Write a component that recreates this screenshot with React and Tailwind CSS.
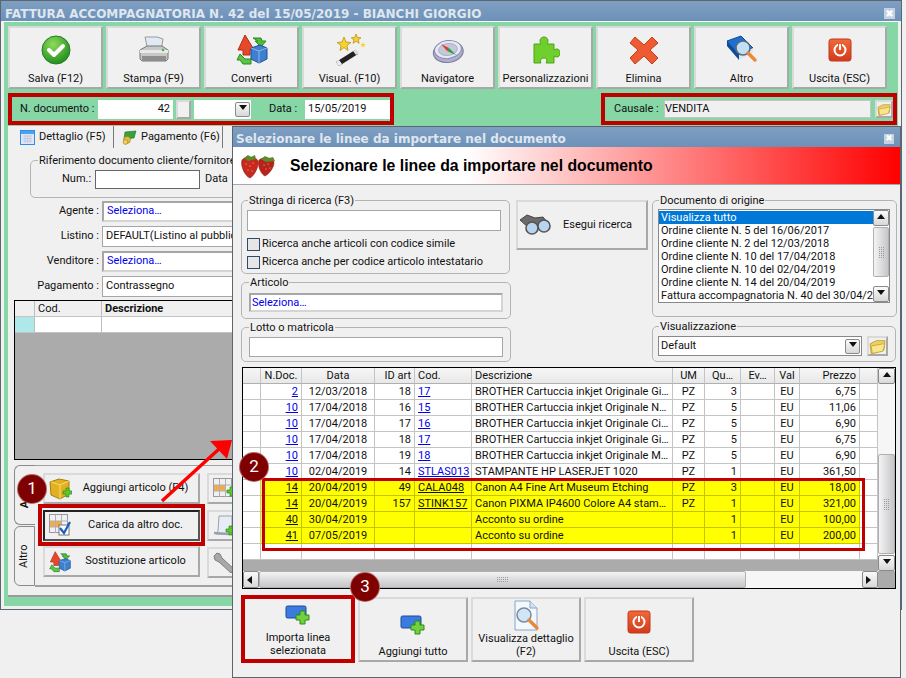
import { Fragment } from "react";

// ---- icons ----
function IconSave() {
  return (
    <svg width="30" height="30" viewBox="0 0 30 30">
      <defs>
        <radialGradient id="sv" cx="40%" cy="30%" r="75%">
          <stop offset="0" stopColor="#8fdc5a" />
          <stop offset="1" stopColor="#1b8a1b" />
        </radialGradient>
      </defs>
      <circle cx="15" cy="15" r="14" fill="url(#sv)" stroke="#2a7d2a" />
      <path d="M8 15l5 5 9-9" fill="none" stroke="#fff" strokeWidth="4" strokeLinecap="round" strokeLinejoin="round" />
    </svg>
  );
}
function IconPrint() {
  return (
    <svg width="32" height="30" viewBox="0 0 32 30">
      <path d="M7 2h12l6 2-2 12H10z" fill="#dfeaf5" stroke="#9a9a9a" />
      <path d="M2 15l7-4h15l6 4v9l-2 2H4l-2-2z" fill="#c8c8c8" stroke="#777" />
      <path d="M2 15h28v3H2z" fill="#e9e9e9" />
      <path d="M4 21h24v5H4z" fill="#8e8e8e" />
      <circle cx="25" cy="15" r="1.2" fill="#39b54a" />
    </svg>
  );
}
function IconConvert({ s = 32 }) {
  return (
    <svg width={s} height={s} viewBox="0 0 32 32">
      <path d="M9 1l8 13-3 2v5H7v-5H2z" fill="#e8482a" stroke="#b32c12" />
      <path d="M17 4h8l1 3h4l-5 6-6-6h3z" fill="#4fbf3a" stroke="#2b8a20" />
      <path d="M4 20l5 5h6v5H7l-3-4H1z" fill="#5ac445" stroke="#2b8a20" />
      <path d="M15 14l9-3 7 3v11l-8 4-8-4z" fill="#3f7fd0" stroke="#1d4f96" />
      <path d="M15 14l8 3 8-3M23 17v12" fill="none" stroke="#8db8ea" />
    </svg>
  );
}
function IconWand() {
  return (
    <svg width="32" height="32" viewBox="0 0 32 32">
      <path d="M2 28l19-12 3 4-19 12z" fill="#222" />
      <path d="M19 17l3-2 3 4-3 2z" fill="#ddd" />
      <path d="M2 28l3-2 3 4-3 2z" fill="#eee" />
      <path d="M10 3l2 5 5 .5-4 3 1 5-4-3-4 3 1-5-4-3 5-.5z" fill="#f7d22e" stroke="#b48a10" strokeWidth=".7" />
      <path d="M22 0l1.5 3.5 3.5.3-2.7 2 .8 3.5-3-2-3 2 .8-3.5-2.7-2 3.5-.3z" fill="#f7d22e" stroke="#b48a10" strokeWidth=".7" />
      <path d="M29 8l.7 2 2 .2-1.5 1.2.5 2-1.7-1.1-1.7 1.1.5-2-1.5-1.2 2-.2z" fill="#f7d22e" />
    </svg>
  );
}
function IconCompass() {
  return (
    <svg width="32" height="28" viewBox="0 0 32 28">
      <g transform="rotate(-8 16 14)">
        <ellipse cx="16" cy="16" rx="15" ry="10.5" fill="#aeaed2" stroke="#7a7a9c" />
        <ellipse cx="16" cy="13.5" rx="13.5" ry="9" fill="#e6e8f6" stroke="#8a8aa8" />
        <ellipse cx="16" cy="13.5" rx="9.5" ry="6" fill="#c4c8d8" stroke="#9a9ab4" strokeWidth=".6" />
      </g>
      <path d="M9 8l8 4-2 3z" fill="#e23b2a" />
      <path d="M24 19l-9-4 2-3z" fill="#2f9e3f" />
    </svg>
  );
}
function IconPuzzle() {
  return (
    <svg width="28" height="30" viewBox="0 0 28 30">
      <path d="M2 9h7c-2-3-1-7 3-7s5 4 3 7h7v6c3-2 6-1 6 3s-3 5-6 3v7h-8c2-3 0-5-2-5s-5 2-3 5H2z" fill="#6fcf2c" stroke="#4aa318" />
    </svg>
  );
}
function IconX() {
  return (
    <svg width="30" height="30" viewBox="0 0 30 30">
      <path d="M6 2l9 8 8-8 6 6-8 7 8 8-6 6-8-8-9 8-5-6 8-8-8-7z" fill="#ee5a32" stroke="#c43d18" strokeLinejoin="round" />
    </svg>
  );
}
function IconBook() {
  return (
    <svg width="32" height="30" viewBox="0 0 32 30">
      <path d="M1 6l14-5 12 12-14 7z" fill="#1f6fd1" stroke="#0f4a9a" />
      <path d="M1 6l12 14v5L1 11z" fill="#0f4a9a" />
      <path d="M13 20l14-7v5l-14 7z" fill="#dfe7f2" />
      <circle cx="17" cy="13" r="7" fill="#bfe0f7" stroke="#5b6b7a" strokeWidth="1.6" />
      <path d="M22 18l7 7" stroke="#e88a3a" strokeWidth="3.4" strokeLinecap="round" />
    </svg>
  );
}
function IconPower({ s = 24 }) {
  return (
    <svg width={s} height={s} viewBox="0 0 24 24">
      <defs>
        <linearGradient id="pw" x1="0" y1="0" x2="0" y2="1">
          <stop offset="0" stopColor="#ef6a3c" />
          <stop offset="1" stopColor="#d23a1c" />
        </linearGradient>
      </defs>
      <rect x="1" y="1" width="22" height="22" rx="2.5" fill="url(#pw)" stroke="#c0391a" />
      <circle cx="12" cy="12" r="5.5" fill="none" stroke="#fff" strokeWidth="2" />
      <path d="M12 5v7" stroke="#e9542a" strokeWidth="4" />
      <path d="M12 6v6" stroke="#fff" strokeWidth="2" />
    </svg>
  );
}
function IconFolder() {
  return (
    <svg width="18" height="17" viewBox="0 0 16 15">
      <path d="M1 5l6-3 8 0-1 9-10 3H2z" fill="#f0d060" stroke="#b89a30" strokeWidth=".8" />
      <path d="M2 7l11-2 2 0-2 7-10 2z" fill="#f8e58c" stroke="#c2a438" strokeWidth=".8" />
    </svg>
  );
}
function IconAddLine() {
  return (
    <svg width="26" height="20" viewBox="0 0 26 20">
      <rect x="1" y="1" width="20" height="12" rx="1.5" fill="#3b7be0" stroke="#1f4a9c" />
      <path d="M15 6h5v4h4v5h-4v4h-5v-4h-4v-5h4z" fill="#73d13d" stroke="#2f8a1a" />
    </svg>
  );
}
function IconDocSearch() {
  return (
    <svg width="27" height="32" viewBox="0 0 27 32">
      <path d="M2 1h15l7 7v22H2z" fill="#f3f8fe" stroke="#8aa4c4" />
      <path d="M17 1v7h7" fill="#d4e3f4" stroke="#8aa4c4" />
      <circle cx="11" cy="15" r="7" fill="#cfe6f8" stroke="#7c8a98" strokeWidth="1.5" />
      <path d="M16 20l8 8" stroke="#e88a3a" strokeWidth="3.4" strokeLinecap="round" />
    </svg>
  );
}
function IconStrawberry() {
  return (
    <svg width="38" height="26" viewBox="0 0 38 26">
      <path d="M2 7c3-4 14-4 16 1 1 6-4 15-8 17-4-1-10-11-8-18z" fill="#c8281e" stroke="#8f1a12" strokeWidth=".6" />
      <path d="M19 7c3-3 14-3 15 2 0 6-5 12-9 14-3-1-8-9-6-16z" fill="#b92219" stroke="#8f1a12" strokeWidth=".6" />
      <path d="M4 5l4-3 3 2 4-2 1 4-8 2zM21 6l4-3 4 2 4-1 2 4-9 1z" fill="#5d8a2b" />
      <path d="M6 11h.1M10 13h.1M13 10h.1M8 17h.1M12 18h.1M24 12h.1M28 11h.1M26 16h.1M30 15h.1" stroke="#f2c7a0" strokeWidth="1.1" strokeLinecap="round" />
    </svg>
  );
}
function IconBinoculars() {
  return (
    <svg width="32" height="22" viewBox="0 0 32 22">
      <path d="M1 6l7-5 8 3 8-1 4 5-7 4-6-2-5 4z" fill="#6b6b6b" stroke="#444" />
      <circle cx="13" cy="14" r="6" fill="#b8d4f0" stroke="#555" strokeWidth="1.6" />
      <circle cx="25" cy="12" r="6" fill="#b8d4f0" stroke="#555" strokeWidth="1.6" />
    </svg>
  );
}
function IconTab() {
  return (
    <svg width="15" height="15" viewBox="0 0 15 15">
      <rect x=".5" y=".5" width="14" height="14" fill="#dfe6f5" stroke="#2f8fe8" />
      <rect x="1" y="1" width="13" height="3" fill="#4aa3ee" />
      <path d="M3 6h9M3 8.5h9M3 11h9M5 5v8M7.5 5v8M10 5v8" stroke="#b8c0d8" strokeWidth=".7" />
    </svg>
  );
}
function IconMoney() {
  return (
    <svg width="15" height="15" viewBox="0 0 15 15">
      <path d="M3 2l11-1-2 7-10 1z" fill="#3aa23a" stroke="#1c6e1c" strokeWidth=".6" />
      <circle cx="5" cy="10" r="3.4" fill="#e8c040" stroke="#9a7a10" strokeWidth=".6" />
      <circle cx="3.5" cy="12" r="2.4" fill="#f0d060" stroke="#9a7a10" strokeWidth=".6" />
    </svg>
  );
}
function IconCube() {
  return (
    <svg width="24" height="24" viewBox="0 0 24 24">
      <path d="M2 5l9-3 10 2v13l-9 5-9-4z" fill="#e2b122" stroke="#a87f10" />
      <path d="M3 5l9 3 9-4M12 8v14" fill="none" stroke="#f6dc70" />
      <path d="M15 14h3v-3h3v3h3v3h-3v3h-3v-3h-3z" fill="#5ac92e" stroke="#2c8a14" strokeWidth=".7" />
    </svg>
  );
}
function IconGrid({ check, plus }) {
  return (
    <svg width="22" height="22" viewBox="0 0 22 22">
      <rect x=".5" y=".5" width="18" height="18" fill="#eef0f4" stroke="#9a9a9a" />
      <rect x="1" y="7" width="12" height="6" fill="#f4a94a" />
      <path d="M6.5 1v18M12.5 1v18M1 7h18M1 13h18" stroke="#b0b0b0" />
      {check && <rect x="10" y="11" width="10" height="10" fill="#fff" stroke="#777" />}
      {check && <path d="M11 14l4 5 6-11" fill="none" stroke="#1a5cc0" strokeWidth="2.2" />}
      {plus && <path d="M14 12h3v-3h3v3h2v3h-2v3h-3v-3h-3z" fill="#5ac92e" stroke="#2c8a14" strokeWidth=".7" />}
    </svg>
  );
}
function IconScroll() {
  return (
    <svg width="22" height="24" viewBox="0 0 22 24">
      <path d="M6 2h13v14l-3 4H3l2-3z" fill="#e8ecf4" stroke="#9aa0b0" />
      <path d="M1 19l15 1" stroke="#9aa0b0" strokeWidth="2.4" />
      <path d="M13 15h3v-3h3v3h3v3h-3v3h-3v-3h-3z" fill="#5ac92e" stroke="#2c8a14" strokeWidth=".7" />
    </svg>
  );
}
function IconWrench() {
  return (
    <svg width="24" height="24" viewBox="0 0 24 24">
      <path d="M2 5l3-3 3 1 2 4 12 11-3 4L7 11 3 9z" fill="#a8a8a8" stroke="#808080" />
    </svg>
  );
}
function Tri({ dir }) {
  const p = { up: "M1 6l4-5 4 5z", down: "M1 1l4 5 4-5z", left: "M6 1L1 5l5 4z", right: "M1 1l5 4-5 4z" }[dir];
  return (
    <svg width="10" height="10" viewBox="0 0 10 10">
      <path d={p} fill="#111" />
    </svg>
  );
}

// ---- bits ----
const raised = "bg-[#f0f0f0] border-2 border-t-[#dadada] border-l-[#dadada] border-r-[#a8a8a8] border-b-[#a8a8a8]";
const scrollBtn = "flex items-center justify-center bg-gradient-to-b from-[#fafafa] to-[#d8d8d8] border border-[#8a8a8a] rounded-[2px]";
const thumbV = "bg-gradient-to-r from-[#f4f4f4] to-[#c6c6ca] border border-[#b0b0b0] rounded-[2px]";
const thumbH = "bg-gradient-to-b from-[#f4f4f4] to-[#c6c6ca] border border-[#b0b0b0] rounded-[2px]";

function Grip({ cols, rows }) {
  return (
    <div className="grid gap-[1px]" style={{ gridTemplateColumns: `repeat(${cols}, 1px)` }}>
      {Array.from({ length: cols * rows }).map((_, i) => (
        <span key={i} className="w-[1px] h-[1px] bg-[#9a9a9a]" />
      ))}
    </div>
  );
}

function ToolButton({ icon, label }) {
  return (
    <button className={`${raised} w-[95px] h-[63px] shrink-0 flex flex-col items-center`}>
      <span className="h-[35px] mt-[5px] flex items-center justify-center">{icon}</span>
      <span className="mt-[4px]">{label}</span>
    </button>
  );
}

function FormRow({ label, value, blue, inset, className = "" }) {
  return (
    <div className={`flex items-center ${className}`}>
      <span className="w-[92px] text-right pr-[3px] shrink-0">{label}</span>
      <div className={`w-[300px] h-[21px] flex items-center pl-[3px] bg-white ${inset ? "border-2 border-[#d4d4d4] border-l-[#a6a6a6] border-t-[#a6a6a6]" : "border border-[#a6a6a6]"} ${blue ? "text-[#0000ee]" : ""}`}>
        {value}
      </div>
    </div>
  );
}

function SideButton({ icon, label, className = "" }) {
  return (
    <button className={`${raised} w-[157px] h-[31px] shrink-0 flex items-center pl-[2px] ${className}`}>
      <span className="w-[26px] flex justify-center shrink-0">{icon}</span>
      <span className="flex-1 text-center whitespace-nowrap">{label}</span>
    </button>
  );
}

function Group({ label, className = "", children }) {
  return (
    <fieldset className={`border border-[#b4b4b4] rounded-[5px] ${className}`}>
      <legend className="leading-[13px] px-[1px]">{label}</legend>
      {children}
    </fieldset>
  );
}

function Check({ label }) {
  return (
    <label className="flex items-center gap-[2px] h-[18px]">
      <span className="w-[13px] h-[13px] bg-[#e6e6e6] border border-[#2e4a66]" />
      <span>{label}</span>
    </label>
  );
}

function DialogButton({ icon, label, className = "" }) {
  return (
    <button className={`${raised} h-[65px] flex flex-col items-center justify-end pb-[2px] leading-[13px] ${className}`}>
      <span className="flex-1 flex items-center justify-center">{icon}</span>
      {label}
    </button>
  );
}

// ---- data ----
const docs = [
  "Visualizza tutto",
  "Ordine cliente N. 5 del 16/06/2017",
  "Ordine cliente N. 2 del 12/03/2018",
  "Ordine cliente N. 10 del 17/04/2018",
  "Ordine cliente N. 10 del 02/04/2019",
  "Ordine cliente N. 14 del 20/04/2019",
  "Fattura accompagnatoria N. 40 del 30/04/2019",
];

const headers = ["", "N.Doc.", "Data", "ID art", "Cod.", "Descrizione", "UM", "Qu…", "Ev…", "Val", "Prezzo", ""];

const rows = [
  ["2", "12/03/2018", "18", "17", "BROTHER Cartuccia inkjet Originale Gi…", "PZ", "3", "EU", "6,75"],
  ["10", "17/04/2018", "16", "15", "BROTHER Cartuccia inkjet Originale N…", "PZ", "5", "EU", "11,06"],
  ["10", "17/04/2018", "17", "16", "BROTHER Cartuccia inkjet Originale Ci…", "PZ", "5", "EU", "6,90"],
  ["10", "17/04/2018", "18", "17", "BROTHER Cartuccia inkjet Originale Gi…", "PZ", "5", "EU", "6,75"],
  ["10", "17/04/2018", "19", "18", "BROTHER Cartuccia inkjet Originale M…", "PZ", "5", "EU", "6,90"],
  ["10", "02/04/2019", "14", "STLAS013", "STAMPANTE HP LASERJET 1020", "PZ", "1", "EU", "361,50"],
  ["14", "20/04/2019", "49", "CALA048", "Canon A4 Fine Art Museum Etching", "PZ", "3", "EU", "18,00", true],
  ["14", "20/04/2019", "157", "STINK157", "Canon PIXMA IP4600 Colore A4 stam…", "PZ", "1", "EU", "321,00", true],
  ["40", "30/04/2019", "", "", "Acconto su ordine", "", "1", "EU", "100,00", true],
  ["41", "07/05/2019", "", "", "Acconto su ordine", "", "1", "EU", "200,00", true],
  ["", "", "", "", "", "", "", "", ""],
];

const cell = "h-4 px-[3px] leading-[15px] border-r border-b border-[#c4c4c4] whitespace-nowrap overflow-hidden";

export default function App() {
  return (
    <div className="relative w-[906px] h-[678px] overflow-hidden bg-[#f0f0f0] text-[11px] text-[#111] font-['Roboto',sans-serif]">
      {/* finestra fattura */}
      <div className="absolute left-0 top-0 w-[902px] h-[610px] border border-[#5c6670] bg-[#f0f0f0] flex flex-col">
        <div className="h-[20px] shrink-0 flex items-center justify-between pt-[5px] pl-[4px] pr-[6px] bg-gradient-to-b from-[#7f9fc2] to-[#6c91b8] text-[#dfe6ee] font-bold text-[12px] font-['DejaVu_Sans',sans-serif] whitespace-nowrap">
          <span>FATTURA ACCOMPAGNATORIA N. 42 del 15/05/2019 - BIANCHI GIORGIO</span>
          <span className="w-[11px] h-[11px] flex items-center justify-center bg-[#c3d2e2] text-white text-[10px]">✖</span>
        </div>

        <div className="flex-1 mx-[3px] mb-[3px] bg-[#86d6a6] border-t border-white flex flex-col pl-[4px]">
          <div className="flex gap-[3px] mt-[4px]">
            <ToolButton icon={<IconSave />} label="Salva (F12)" />
            <ToolButton icon={<IconPrint />} label="Stampa (F9)" />
            <ToolButton icon={<IconConvert />} label="Converti" />
            <ToolButton icon={<IconWand />} label="Visual. (F10)" />
            <ToolButton icon={<IconCompass />} label="Navigatore" />
            <ToolButton icon={<IconPuzzle />} label="Personalizzazioni" />
            <ToolButton icon={<IconX />} label="Elimina" />
            <ToolButton icon={<IconBook />} label="Altro" />
            <ToolButton icon={<IconPower />} label="Uscita (ESC)" />
          </div>

          <div className="flex justify-between mt-[4px] pr-[1px] h-[32px]">
            <div className="w-[386px] border-4 border-[#c00000] flex items-center overflow-hidden">
              <span className="ml-[8px] w-[78px] shrink-0">N. documento :</span>
              <div className="w-[75px] h-[19px] bg-white shrink-0 text-right pr-[3px] leading-[18px]">42</div>
              <div className={`${raised} w-[15px] h-[19px] ml-[3px] shrink-0 border`} />
              <div className="w-[57px] h-[19px] bg-white ml-[3px] shrink-0 flex items-center justify-end pr-[1px]">
                <span className={`${scrollBtn} w-[15px] h-[15px]`}><Tri dir="down" /></span>
              </div>
              <span className="ml-[18px] w-[36px] shrink-0">Data :</span>
              <div className="w-[90px] h-[19px] bg-white shrink-0 pl-[3px] leading-[18px]">15/05/2019</div>
            </div>
            <div className="w-[296px] border-4 border-[#c00000] flex items-center">
              <span className="ml-[9px] w-[50px] shrink-0">Causale :</span>
              <div className="w-[207px] h-[18px] bg-[#f0f0f0] border border-[#c4c4c4] leading-[15px]">VENDITA</div>
              <div className={`${raised} border w-[18px] h-[18px] ml-[4px] flex items-center justify-center`}><IconFolder /></div>
            </div>
          </div>

          {/* pannello con schede */}
          <div className="flex-1 mr-[1px] mt-[1px] mb-[9px] bg-[#f0f0f0] border-b-2 border-[#9a9a9a] flex flex-col overflow-hidden">
            <div className="h-[22px] shrink-0 flex bg-[#f0f0f0]">
              <div className="w-[104px] ml-[1px] flex items-center gap-[4px] pl-[11px] whitespace-nowrap">
                <IconTab /> Dettaglio (F5)
              </div>
              <div className="w-[110px] border-l border-r border-[#7a7a7a] flex items-center gap-[4px] pl-[8px] whitespace-nowrap">
                <IconMoney /> Pagamento (F6)
              </div>
            </div>

            <div className="ml-[22px] mt-[6px] w-[420px]">
              <Group label="Riferimento documento cliente/fornitore" className="h-[44px] px-[7px]">
                <div className="flex items-center mt-[3px] pl-[24px]">
                  <span className="w-[33px]">Num.:</span>
                  <div className="w-[105px] h-[19px] bg-white border border-[#666]" />
                  <span className="ml-[5px]">Data</span>
                </div>
              </Group>
            </div>

            <div className="ml-[2px] mt-[3px] flex flex-col gap-[4px]">
              <FormRow label="Agente :" value="Seleziona…" blue inset />
              <FormRow label="Listino :" value="DEFAULT(Listino al pubblico)" />
              <FormRow label="Venditore :" value="Seleziona…" blue inset />
              <FormRow label="Pagamento :" value="Contrassegno" />
            </div>

            <div className="ml-[6px] mt-[3px] w-[400px] h-[160px] border border-black bg-[#ababab]">
              <div className="flex h-[16px] bg-[#f0f0f0] border-b border-[#c4c4c4]">
                <span className="w-[20px] border-r border-[#bdbdbd]" />
                <span className="w-[67px] pl-[3px] border-r border-[#bdbdbd] leading-[15px]">Cod.</span>
                <span className="pl-[3px] font-bold leading-[15px]">Descrizione</span>
              </div>
              <div className="flex h-[16px] bg-white border-b border-[#c4c4c4]">
                <span className="w-[20px] bg-[#aee8e8] border-r border-[#bdbdbd]" />
                <span className="w-[67px] border-r border-[#bdbdbd]" />
              </div>
            </div>

            <div className="ml-[6px] mt-[5px] flex h-[122px] w-[400px]">
              <div className="w-[21px] shrink-0 flex flex-col">
                <div className="h-[60px] bg-[#f0f0f0] border border-r-0 border-[#8a8a8a] rounded-l-[6px] flex items-end justify-center font-bold pb-[20px]">
                  <span className="-rotate-90 whitespace-nowrap shrink-0">Artic</span>
                </div>
                <div className="h-[60px] mt-[1px] bg-[#f0f0f0] border border-[#8a8a8a] rounded-l-[6px] flex items-center justify-center">
                  <span className="-rotate-90">Altro</span>
                </div>
              </div>
              <div className="flex-1 border-t border-b-2 border-[#a0a0a0] pl-[8px] pt-[7px]">
                <div className="flex gap-[7px]">
                  <div className="flex flex-col">
                    <SideButton icon={<IconCube />} label="Aggiungi articolo (F4)" />
                    <div className="w-[167px] h-[42px] -ml-[5px] border-4 border-[#c00000] flex items-center justify-center">
                      <SideButton icon={<IconGrid check />} label="Carica da altro doc." className="!border-r-[#555] !border-b-[#555] !border-t-[#222] !border-l-[#222] w-[157px] h-[30px]" />
                    </div>
                    <SideButton icon={<IconConvert s={22} />} label="Sostituzione articolo" />
                  </div>
                  <div className="flex flex-col gap-[6px] -ml-[5px]">
                    <SideButton icon={<IconGrid plus />} label="" />
                    <SideButton icon={<IconScroll />} label="" />
                    <SideButton icon={<IconWrench />} label="" />
                  </div>
                </div>
              </div>
            </div>
          </div>
        </div>
      </div>

      {/* freccia */}
      <svg className="absolute left-[155px] top-[430px]" width="80" height="80" viewBox="0 0 80 80">
        <path d="M7 71L64 19" stroke="#f00" strokeWidth="3.4" />
        <path d="M77 10L72 29 55 11z" fill="#f00" />
      </svg>

      {/* dialogo di importazione */}
      <div className="absolute left-[232px] top-[126px] w-[669px] h-[552px] border border-[#5c6670] bg-[#f0f0f0] flex flex-col">
        <div className="h-[20px] shrink-0 flex items-center justify-between pt-[4px] pl-[3px] pr-[6px] bg-gradient-to-b from-[#7f9fc2] to-[#6c91b8] text-[#dfe6ee] font-bold text-[12px] font-['DejaVu_Sans',sans-serif]">
          <span>Selezionare le linee da importare nel documento</span>
          <span className="w-[10px] h-[10px] flex items-center justify-center bg-[#c3d2e2] text-white text-[9px]">✖</span>
        </div>
        <div className="h-[38px] shrink-0 flex items-center pl-[7px] gap-[12px] border-b border-[#a8a8a8] bg-[linear-gradient(to_right,#fff_35%,#ff0000)]">
          <IconStrawberry />
          <span className="font-['Liberation_Sans',sans-serif] font-bold text-[15.8px] text-black">Selezionare le linee da importare nel documento</span>
        </div>

        <div className="flex pl-[8px] pt-[9px] h-[177px] shrink-0">
          <div className="w-[269px] shrink-0 flex flex-col gap-[2px]">
            <Group label="Stringa di ricerca (F3)" className="h-[80px] px-[6px]">
              <div className="w-[254px] h-[21px] -ml-[1px] bg-white border border-[#a6a6a6] mt-[3px]" />
              <div className="mt-[4px] -ml-[1px]">
                <Check label="Ricerca anche articoli con codice simile" />
                <Check label="Ricerca anche per codice articolo intestatario" />
              </div>
            </Group>
            <Group label="Articolo" className="h-[43px] px-[7px]">
              <div className="w-[254px] h-[19px] mt-[4px] bg-white border-2 border-[#d4d4d4] border-l-[#a6a6a6] border-t-[#a6a6a6] text-[#0000ee] pl-[1px] leading-[15px]">Seleziona…</div>
            </Group>
            <Group label="Lotto o matricola" className="h-[41px] px-[7px]">
              <div className="w-[254px] h-[20px] mt-[3px] bg-white border border-[#a6a6a6]" />
            </Group>
          </div>

          <div className="ml-[6px] mt-[6px] shrink-0">
            <button className={`${raised} w-[132px] h-[50px] flex items-center pl-[1px]`}>
              <IconBinoculars />
              <span className="flex-1 text-center pr-[2px]">Esegui ricerca</span>
            </button>
          </div>

          <div className="ml-[4px] w-[244px] shrink-0 flex flex-col gap-[3px]">
            <Group label="Documento di origine" className="h-[123px] px-[6px]">
              <div className="w-[232px] h-[94px] mt-[2px] -ml-[1px] bg-white border border-[#888] flex overflow-hidden">
                <div className="w-[214px] shrink-0 pt-[1px] leading-[13px] whitespace-nowrap overflow-hidden">
                  {docs.map((d, i) => (
                    <div key={d} className={i === 0 ? "bg-[#0078d7] text-white pl-[2px]" : "pl-[2px]"}>{d}</div>
                  ))}
                </div>
                <div className="w-[16px] shrink-0 flex flex-col">
                  <div className={`${scrollBtn} h-[16px]`}><Tri dir="up" /></div>
                  <div className={`${thumbV} h-[50px] mt-[1px] flex items-center justify-center`}><Grip cols={3} rows={6} /></div>
                  <div className="flex-1" />
                  <div className={`${scrollBtn} h-[16px]`}><Tri dir="down" /></div>
                </div>
              </div>
            </Group>
            <Group label="Visualizzazione" className="h-[42px] px-[6px]">
              <div className="flex items-center -ml-[1px] mt-[3px]">
                <div className="w-[204px] h-[20px] bg-white border border-[#888] flex items-center justify-between pl-[2px] pr-[1px]">
                  Default
                  <span className={`${scrollBtn} w-[15px] h-[15px]`}><Tri dir="down" /></span>
                </div>
                <div className={`${raised} border w-[21px] h-[20px] ml-[5px] flex items-center justify-center`}><IconFolder /></div>
              </div>
            </Group>
          </div>
        </div>

        {/* griglia righe */}
        <div className="relative ml-[9px] mt-[5px] w-[654px] h-[222px] shrink-0 border border-black bg-[#ababab] flex flex-col">
          <div className="flex h-[204px]">
            <div className="w-[635px] shrink-0">
              <div className="grid grid-cols-[18px_41px_73px_40px_57px_201px_32px_36px_34px_25px_60px_18px] bg-white">
                {headers.map((h, i) => (
                  <div key={i} className={`${cell} !h-[16px] bg-gradient-to-b from-[#f6f6f6] to-[#e8e8e8] border-b-[#b0b0b0] ${[1, 2, 6, 7, 8, 9].includes(i) ? "text-center" : ""} ${i === 3 || i === 10 ? "text-right" : ""}`}>{h}</div>
                ))}
                {rows.map((r, n) => {
                  const hl = r[9];
                  const bg = hl ? "bg-[#ffff00] border-[#c4c400]" : "";
                  return (
                    <Fragment key={n}>
                      <div className={cell} />
                      <div className={`${cell} ${bg} text-right underline ${hl ? "" : "text-[#0000ee]"}`}>{r[0]}</div>
                      <div className={`${cell} ${bg} text-center`}>{r[1]}</div>
                      <div className={`${cell} ${bg} text-right`}>{r[2]}</div>
                      <div className={`${cell} ${bg} underline ${hl ? "" : "text-[#0000ee]"}`}>{r[3]}</div>
                      <div className={`${cell} ${bg}`}>{r[4]}</div>
                      <div className={`${cell} ${bg} text-center`}>{r[5]}</div>
                      <div className={`${cell} ${bg} text-right`}>{r[6]}</div>
                      <div className={`${cell} ${bg}`} />
                      <div className={`${cell} ${bg} text-center`}>{r[7]}</div>
                      <div className={`${cell} ${bg} text-right`}>{r[8]}</div>
                      <div className={cell} />
                    </Fragment>
                  );
                })}
              </div>
            </div>
            <div className="w-[17px] shrink-0 flex flex-col bg-[#f6f6f6]">
              <div className={`${scrollBtn} h-[16px]`}><Tri dir="up" /></div>
              <div className="h-[70px]" />
              <div className={`${thumbV} h-[100px] flex items-center justify-center`}><Grip cols={3} rows={6} /></div>
              <div className={`${scrollBtn} h-[16px] mt-[1px]`}><Tri dir="down" /></div>
            </div>
          </div>
          <div className="flex h-[17px] mr-[17px] bg-[#f6f6f6]">
            <div className={`${scrollBtn} w-[16px]`}><Tri dir="left" /></div>
            <div className={`${thumbH} w-[487px] flex items-center justify-center`}><Grip cols={6} rows={3} /></div>
            <div className="flex-1" />
            <div className={`${scrollBtn} w-[16px]`}><Tri dir="right" /></div>
          </div>
          {/* riquadro rosso righe evidenziate */}
          <div className="absolute left-[19px] top-[110px] w-[603px] h-[73px] border-[3px] border-[#c00000]" />
        </div>

        <div className="flex gap-[3px] ml-[8px] mt-[8px]">
          <div className="w-[114px] h-[68px] -mt-[2px] border-4 border-[#c00000]">
            <DialogButton icon={<IconAddLine />} label={<span>Importa linea<br />selezionata</span>} className="w-full !h-full !border-0" />
          </div>
          <DialogButton icon={<span className="pt-[6px]"><IconAddLine /></span>} label="Aggiungi tutto" className="w-[110px]" />
          <DialogButton icon={<IconDocSearch />} label={<span className="text-center">Visualizza dettaglio<br />(F2)</span>} className="w-[110px]" />
          <DialogButton icon={<IconPower />} label="Uscita (ESC)" className="w-[110px]" />
        </div>
      </div>

      {/* numeri dei passi */}
      <span className="absolute left-[17px] top-[474px] w-[30px] h-[30px] rounded-full bg-[#7f0000] text-white text-[17px] flex items-center justify-center border border-white/40">1</span>
      <span className="absolute left-[239px] top-[452px] w-[30px] h-[30px] rounded-full bg-[#7f0000] text-white text-[17px] flex items-center justify-center border border-white/40">2</span>
      <span className="absolute left-[350px] top-[572px] w-[30px] h-[30px] rounded-full bg-[#7f0000] text-white text-[17px] flex items-center justify-center border border-white/40">3</span>
    </div>
  );
}
